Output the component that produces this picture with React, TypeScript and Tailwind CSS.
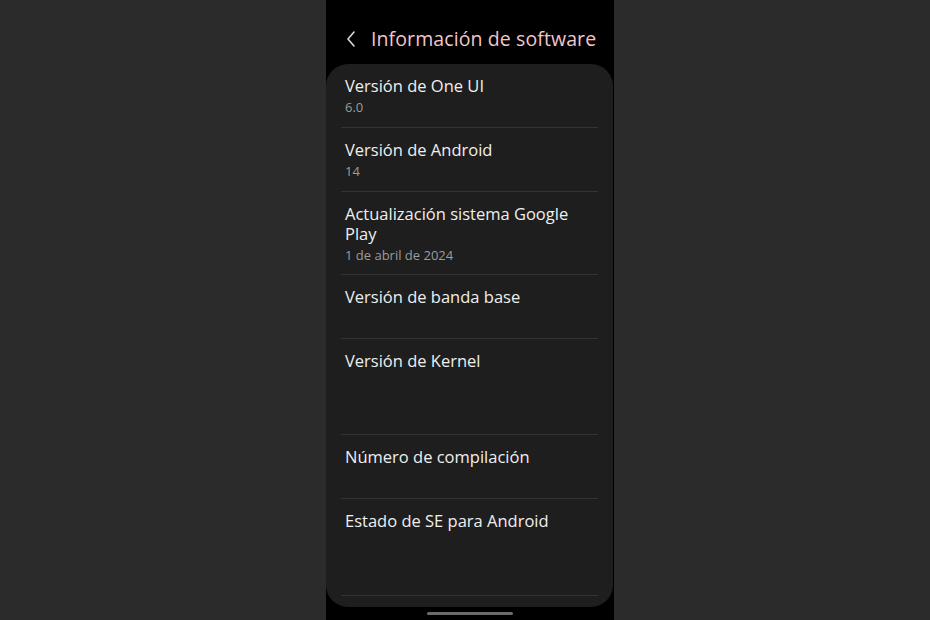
import React from "react";

const rows = [
  { title: "Versión de One UI", sub: "6.0", h: "h-[64px]" },
  { title: "Versión de Android", sub: "14", h: "h-[64px]" },
  { title: "Actualización sistema Google Play", sub: "1 de abril de 2024", h: "h-[83px]" },
  { title: "Versión de banda base", sub: "", h: "h-[64px]" },
  { title: "Versión de Kernel", sub: "", h: "h-[96px]" },
  { title: "Número de compilación", sub: "", h: "h-[64px]" },
  { title: "Estado de SE para Android", sub: "", h: "h-[97px]" },
];

export default function App() {
  return (
    <div
      className="w-[930px] h-[620px] bg-[#2b2b2b] flex pl-[326px] overflow-hidden"
      style={{ fontFamily: '"Open Sans", "Noto Sans", sans-serif' }}
    >
      <div className="w-[288px] h-full bg-black flex flex-col">
        {/* Header */}
        <div className="h-[64px] shrink-0 flex items-center pl-[19px] pt-[13px]">
          <svg width="12" height="18" viewBox="0 0 12 18" className="mr-[14px]">
            <path d="M9 2 L3 9 L9 16" fill="none" stroke="#d8d8d8" strokeWidth="1.6" strokeLinecap="round" strokeLinejoin="round" />
          </svg>
          <h1 className="text-[19.5px] text-[#f2c6c9] tracking-[0.1px]">Información de software</h1>
        </div>

        {/* Card */}
        <div className="bg-[#1e1e1e] rounded-[22px] h-[543px] mr-[1px] pl-[15px] pr-[15px] flex flex-col">
          {rows.map((row) => (
            <div key={row.title} className={`${row.h} shrink-0 border-b border-[#333333] pt-[12px] pl-[4px]`}>
              <div className="text-[16.5px] leading-[20px] text-[#efefef] pr-6">{row.title}</div>
              {row.sub && (
                <div className="text-[13px] leading-[20px] text-[#9b9b9b] mt-[1px]">{row.sub}</div>
              )}
            </div>
          ))}
        </div>

        {/* Home indicator */}
        <div className="flex-1 flex items-center justify-center">
          <div className="w-[86px] h-[3px] rounded-full bg-[#6c6c6c]" />
        </div>
      </div>
    </div>
  );
}
